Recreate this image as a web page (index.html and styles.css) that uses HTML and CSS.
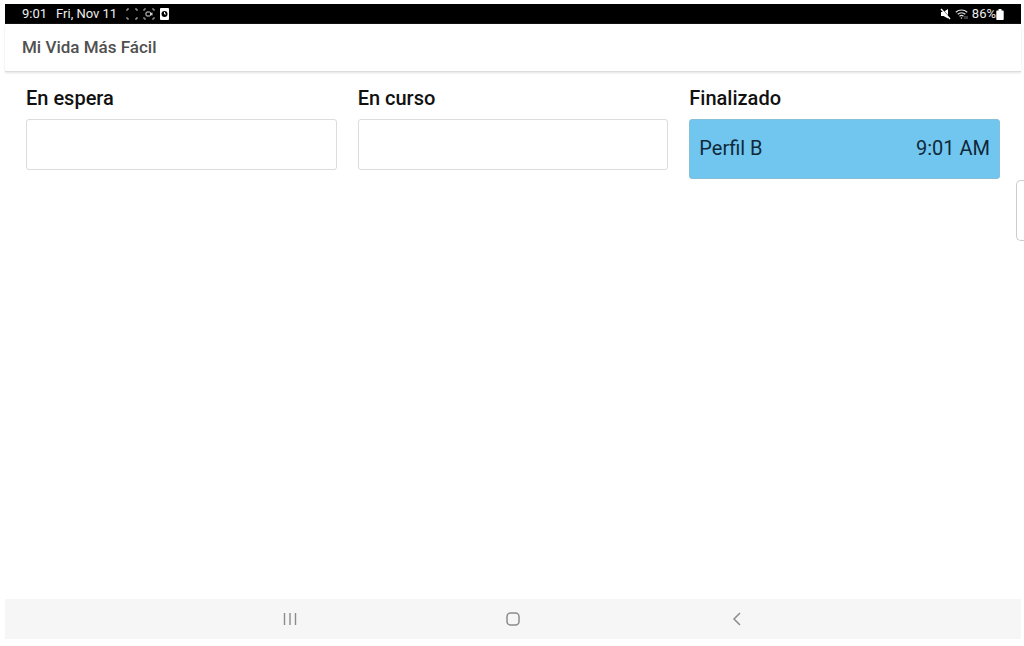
FILE: index.html
```html
<!DOCTYPE html>
<html lang="es">
<head>
<meta charset="utf-8">
<meta name="viewport" content="width=device-width, initial-scale=1">
<title>Mi Vida Más Fácil</title>
<link rel="stylesheet" href="styles.css">
</head>
<body>
<div class="screen">
  <div class="status-bar">
    <div class="status-left">
      <span>9:01</span>
      <span>Fri, Nov 11</span>
      <span class="status-icons">
        <svg width="12" height="12" viewBox="0 0 12 12" fill="none" stroke="#bbb"><path d="M1 3V1h2M9 1h2v2M11 9v2H9M3 11H1V9"/></svg>
        <svg width="12" height="12" viewBox="0 0 12 12" fill="none" stroke="#aaa"><path d="M1 3V1h2M9 1h2v2M11 9v2H9M3 11H1V9"/><rect x="3" y="4" width="4.500" height="4" rx="1" stroke="#ddd"/><path d="M7.500 5l2-.5v3l-2-.5z" fill="#ccc" stroke="none"/></svg>
        <svg width="9" height="12" viewBox="0 0 9 12"><rect width="9" height="12" rx="1" fill="#fff"/><circle cx="4.500" cy="6" r="3" fill="#000"/><path d="M4.500 4v2H6" fill="none" stroke="#fff"/></svg>
      </span>
    </div>
    <div class="status-right">
      <svg width="11" height="12" viewBox="0 0 11 12"><path d="M1 4h2.500L8 1v9.500L3.500 8H1z" fill="#fff"/><path d="M1.500 0.500l9 10" stroke="#000" stroke-width="1"/><path d="M1 1l9 10" stroke="#fff" stroke-width="1.400"/></svg>
      <svg width="13" height="12" viewBox="0 0 13 12" fill="none" stroke="#ddd" stroke-width="1.200"><path d="M.8 4.300C4 1.200 9 1.200 12.200 4.300M2.700 6.300c2.200-2 5.400-2 7.600 0M4.500 8.200c1.200-1 2.800-1 4 0"/><circle cx="6.500" cy="10" r=".8" fill="#ddd" stroke="none"/><path d="M10 8v3M12 8v3" stroke="#999" stroke-width=".8"/></svg>
      <span class="battery">86%<svg width="8" height="11" viewBox="0 0 8 11" fill="#fff"><path d="M2.500 0h3v1.500H7a.7.7 0 0 1 .7.700v8a.8.8 0 0 1-.7.800H1a.8.8 0 0 1-.7-.8v-8a.7.7 0 0 1 .7-.7h1.500z"/></svg></span>
    </div>
  </div>
  <header class="app-bar"><h1 class="app-title">Mi Vida Más Fácil</h1></header>
  <main class="board">
    <section class="column">
      <h2 class="column-title">En espera</h2>
      <div class="slot"></div>
    </section>
    <section class="column">
      <h2 class="column-title">En curso</h2>
      <div class="slot"></div>
    </section>
    <section class="column">
      <h2 class="column-title">Finalizado</h2>
      <div class="card"><span>Perfil B</span><time datetime="09:01">9:01 AM</time></div>
    </section>
  </main>
  <nav class="nav-bar">
    <div class="nav-items">
      <button class="nav-button" type="button" aria-label="Recientes"><svg width="16" height="16" viewBox="0 0 16 16" stroke="#8c8c8c" stroke-width="1.400"><path d="M3.500 2v12M9 2v12M14.500 2v12"/></svg></button>
      <button class="nav-button" type="button" aria-label="Inicio"><svg width="16" height="16" viewBox="0 0 16 16" fill="none" stroke="#8c8c8c" stroke-width="1.500"><rect x="2" y="2" width="12" height="12" rx="3.500"/></svg></button>
      <button class="nav-button" type="button" aria-label="Atrás"><svg width="16" height="16" viewBox="0 0 16 16" fill="none" stroke="#8c8c8c" stroke-width="1.500"><path d="M11 2L5 8l6 6"/></svg></button>
    </div>
  </nav>
  <div class="edge-handle"></div>
</div>
</body>
</html>
```
FILE: styles.css
```css
* {
  box-sizing: border-box;
}

body {
  margin: 0;
  background: #fff;
  color: #111;
  font-family: Roboto, "Liberation Sans", sans-serif;
}

.screen {
  position: relative;
  display: flex;
  flex-direction: column;
  min-height: 100vh;
  padding: 4px 3px 7px 5px;
}

.status-bar {
  display: flex;
  justify-content: space-between;
  align-items: center;
  height: 20px;
  padding: 0 17px;
  background: #000;
  color: #eee;
  font-size: 13px;
  line-height: 20px;
}

.status-left {
  display: flex;
  align-items: center;
  gap: 9px;
}

.status-right,
.status-icons,
.battery {
  display: flex;
  align-items: center;
}

.status-icons {
  gap: 5px;
}

.status-right {
  gap: 4px;
}

.app-bar {
  padding: 12px 17px;
  border-bottom: 1px solid #dcdcdc;
  box-shadow: 0 1px 2px #e4e4e4;
}

.app-title {
  margin: 0;
  color: #505050;
  font-size: 17px;
  font-weight: 500;
  line-height: 23px;
}

.board {
  flex: 1;
  display: grid;
  grid-template-columns: repeat(3, 1fr);
  align-items: start;
  gap: 21px;
  padding: 12px 21px;
}

.column-title {
  margin: 0 0 7px;
  font-size: 20px;
  font-weight: 500;
  line-height: 28px;
}

.slot {
  min-height: 51px;
  border: 1px solid #dcdcdc;
  border-radius: 3px;
}

.card {
  display: flex;
  justify-content: space-between;
  padding: 14px 9px 16px;
  border: 1px solid #86bfd8;
  border-radius: 3px;
  background: #70c6ee;
  color: #10283a;
  font-size: 20px;
  line-height: 28px;
}

.nav-bar {
  padding: 8px 0;
  background: #f6f6f6;
}

.nav-items {
  display: grid;
  grid-template-columns: repeat(3, 1fr);
  width: 66%;
  margin: 0 auto;
}

.nav-button {
  display: flex;
  align-items: center;
  justify-content: center;
  height: 24px;
  padding: 0;
  border: 0;
  background: none;
}

.edge-handle {
  position: absolute;
  top: 180px;
  right: 0;
  width: 8px;
  height: 61px;
  border: 1px solid #ccc;
  border-right: 0;
  border-radius: 5px 0 0 5px;
  background: #fff;
}
```
